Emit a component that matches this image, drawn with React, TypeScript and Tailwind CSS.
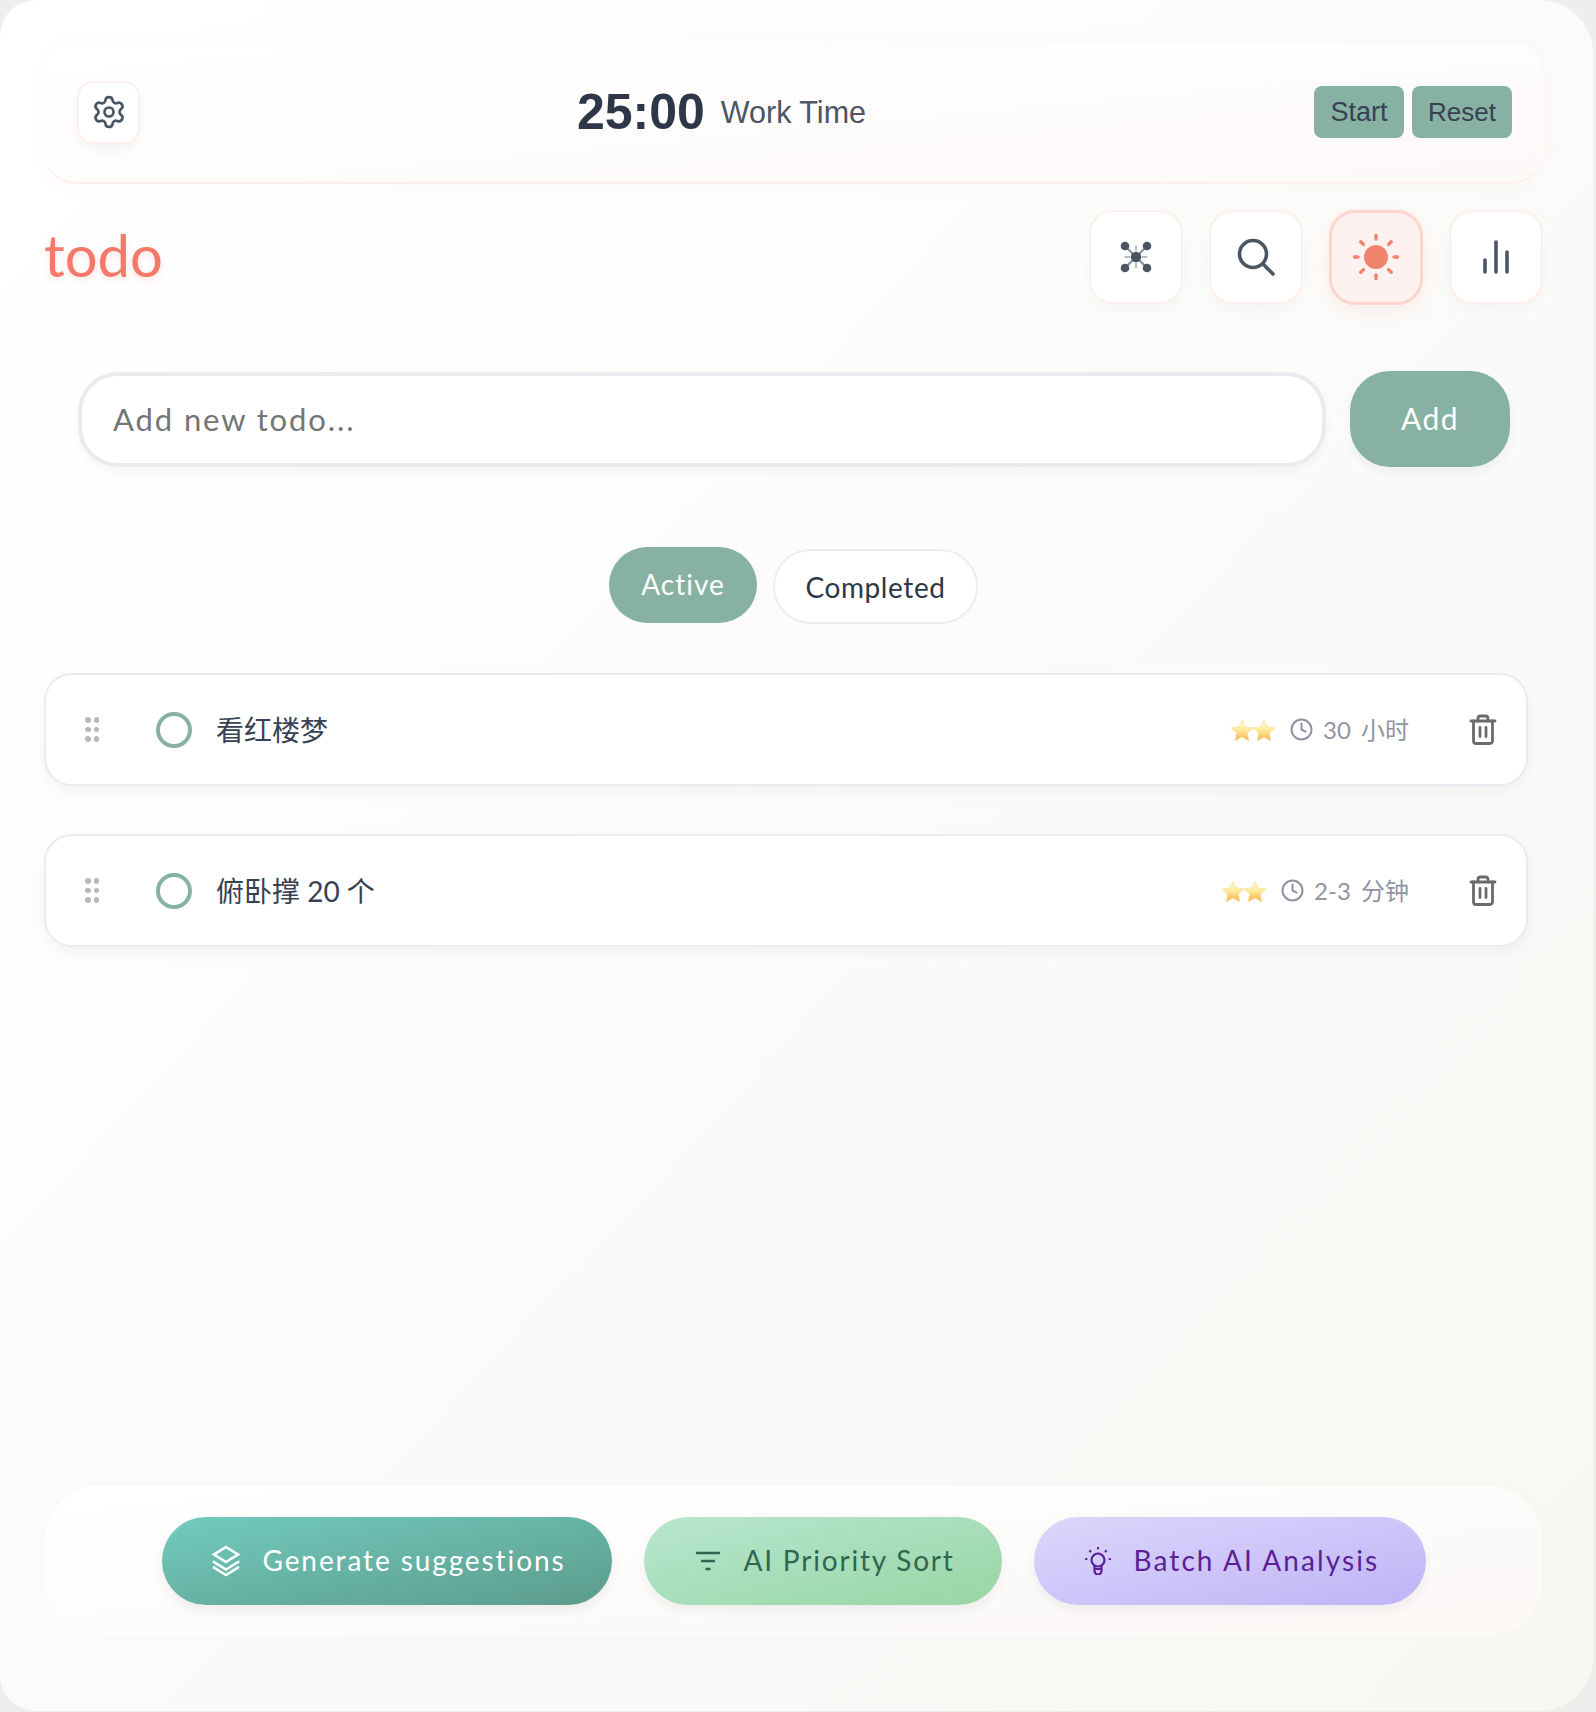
import React from "react";

const LATIN = "font-['Lato','Noto_Sans_CJK_SC',sans-serif]";

function Gear() {
  return (
    <svg width="36" height="36" viewBox="0 0 24 24" fill="none" stroke="#4b5563" strokeWidth="1.8" strokeLinecap="round" strokeLinejoin="round">
      <path d="M9.671 4.136a2.34 2.34 0 0 1 4.659 0 2.34 2.34 0 0 0 3.319 1.915 2.34 2.34 0 0 1 2.33 4.033 2.34 2.34 0 0 0 0 3.831 2.34 2.34 0 0 1-2.33 4.033 2.34 2.34 0 0 0-3.319 1.915 2.34 2.34 0 0 1-4.659 0 2.34 2.34 0 0 0-3.32-1.915 2.34 2.34 0 0 1-2.33-4.033 2.34 2.34 0 0 0 0-3.831A2.34 2.34 0 0 1 6.35 6.051a2.34 2.34 0 0 0 3.319-1.915" />
      <circle cx="12" cy="12" r="3" />
    </svg>
  );
}

function Network() {
  return (
    <svg width="32" height="32" viewBox="0 0 32 32" fill="none" strokeLinecap="round">
      <g stroke="#b9bcc3" strokeWidth="2">
        <path d="M16 5.5v4M16 22.5v4M5.5 16h4M22.5 16h4" />
      </g>
      <g stroke="#8a8f9a" strokeWidth="2.2">
        <path d="M5 5l22 22M27 5L5 27" />
      </g>
      <g fill="#4b5563">
        <circle cx="5" cy="5" r="4.3" />
        <circle cx="27" cy="5" r="4.3" />
        <circle cx="5" cy="27" r="4.3" />
        <circle cx="27" cy="27" r="4.3" />
        <circle cx="16" cy="16" r="5.2" />
      </g>
    </svg>
  );
}

function Search() {
  return (
    <svg width="38" height="38" viewBox="0 0 38 38" fill="none" stroke="#4b5563" strokeWidth="3.6" strokeLinecap="round">
      <circle cx="16" cy="16" r="13.5" />
      <path d="M26 26l10 10" />
    </svg>
  );
}

function Sun() {
  return (
    <svg width="48" height="48" viewBox="0 0 48 48" fill="#f2836c" stroke="none">
      <circle cx="24" cy="24" r="12" />
      <g stroke="#f2836c" strokeWidth="3.4" strokeLinecap="round">
        <path d="M24 2.5v3.5M24 42v3.5M2.5 24H6M42 24h3.5M8.8 8.8l2.6 2.6M36.6 36.6l2.6 2.6M39.2 8.8l-2.6 2.6M11.4 36.6l-2.6 2.6" />
      </g>
    </svg>
  );
}

function Bars() {
  return (
    <svg width="28" height="34" viewBox="0 0 28 34" fill="none" stroke="#4b5563" strokeWidth="3.6" strokeLinecap="round">
      <path d="M3 20v12M14 2v30M25 12v20" />
    </svg>
  );
}

function Dots() {
  return (
    <div className="grid grid-cols-2 gap-x-[3px] gap-y-[4px] w-[14px]">
      {[0, 1, 2, 3, 4, 5].map((i) => (
        <span key={i} className="block w-[5.5px] h-[5.5px] rounded-full bg-[#b7b7c0]" />
      ))}
    </div>
  );
}

function Star() {
  return (
    <svg width="24" height="22" viewBox="0 0 24 22" className="-mr-[2px]">
      <defs>
        <linearGradient id="starfill" x1="0" y1="0" x2="0" y2="1">
          <stop offset="0" stopColor="#fffbe2" />
          <stop offset="0.5" stopColor="#fee896" />
          <stop offset="1" stopColor="#f5ae4c" />
        </linearGradient>
      </defs>
      <path d="M12 1l3.3 7 7.7.9-5.7 5.2 1.5 7.6L12 17.9 5.2 21.7l1.5-7.6L1 8.9 8.7 8z" fill="url(#starfill)" stroke="#f8d88e" strokeWidth="0.6" strokeLinejoin="round" />
    </svg>
  );
}

function Clock() {
  return (
    <svg width="23" height="23" viewBox="0 0 23 23" fill="none" stroke="#8d93a1" strokeWidth="2" strokeLinecap="round" strokeLinejoin="round">
      <circle cx="11.5" cy="11.5" r="10" />
      <path d="M11.5 5.5v6l4 2.2" />
    </svg>
  );
}

function Trash() {
  return (
    <svg width="28" height="31" viewBox="0 0 28 31" fill="none" stroke="#6b6b6b" strokeWidth="2.8" strokeLinecap="round" strokeLinejoin="round">
      <path d="M2 7h24" />
      <path d="M9 7V4.5A2.5 2.5 0 0 1 11.5 2h5A2.5 2.5 0 0 1 19 4.5V7" />
      <path d="M4.5 7v20a2.5 2.5 0 0 0 2.5 2.5h14a2.5 2.5 0 0 0 2.5-2.5V7" />
      <path d="M11 13.5v9M17 13.5v9" />
    </svg>
  );
}

function Layers() {
  return (
    <svg width="34" height="32" viewBox="0 0 34 32" fill="none" stroke="#ffffff" strokeWidth="2.6" strokeLinecap="square">
      <path d="M17 2l12 7.5-12 7.5-12-7.5z" />
      <path d="M5 17l12 7.5 12-7.5" />
      <path d="M5 22.5l12 7.5 12-7.5" />
    </svg>
  );
}

function Filter() {
  return (
    <svg width="24" height="22" viewBox="0 0 24 22" fill="none" stroke="#2f6650" strokeWidth="2.4">
      <path d="M0 3h24M5 11h14M9.5 19h5" />
    </svg>
  );
}

function Bulb() {
  return (
    <svg width="26" height="28" viewBox="0 0 26 28" fill="none" stroke="#5b1f96" strokeWidth="2.2" strokeLinecap="round" strokeLinejoin="round">
      <path d="M13 13m-6.5 0a6.5 6.5 0 1 0 13 0a6.5 6.5 0 1 0-13 0" />
      <path d="M9.5 19v5a3.5 3.5 0 0 0 7 0v-5" />
      <path d="M10 22h6" />
      <path d="M13 1v.5M5 4l.4.5M21 4l-.4.5M1 12h.5M25 12h-.5" />
    </svg>
  );
}

function IconBtn({ children }: { children: React.ReactNode }) {
  return (
    <button className="w-[94px] h-[94px] rounded-[24px] bg-white border-2 border-[#ffefec] shadow-[0_6px_16px_rgba(0,0,0,0.03)] flex items-center justify-center">
      {children}
    </button>
  );
}

function TodoCard({ title, time }: { title: string; time: string }) {
  return (
    <div className="h-[113px] w-[1484px] rounded-[28px] bg-white border-2 border-[#ebebf1] shadow-[0_6px_14px_rgba(0,0,0,0.04)] flex items-center pl-[39px] pr-[29px]">
      <Dots />
      <span className="ml-[57px] w-[36px] h-[36px] rounded-full border-[4px] border-[#86b3a1] box-border" />
      <span className="ml-[24px] flex-1 text-[28px] leading-none text-[#374151] font-['Lato','Noto_Sans_CJK_SC',sans-serif]">{title}</span>
      <div className="flex items-center">
        <Star />
        <Star />
      </div>
      <div className="ml-[16px]">
        <Clock />
      </div>
      <span className="ml-[10px] text-right whitespace-nowrap text-[24px] leading-none [word-spacing:4px] text-[#8f95a3] font-['Lato','Noto_Sans_CJK_SC',sans-serif]">{time}</span>
      <div className="ml-[60px]">
        <Trash />
      </div>
    </div>
  );
}

export default function App() {
  return (
    <div className="w-[1596px] h-[1712px] bg-[#eeeeec] overflow-hidden">
      <div className="w-[1593px] h-[1711px] rounded-tl-[36px] rounded-bl-[36px] rounded-tr-[54px] rounded-br-[54px] bg-gradient-to-br from-white to-[#f7f7f4] flex flex-col pl-[44px] pr-[50px] pt-[42px] pb-[74px]">
        {/* Timer */}
        <div className="h-[142px] shrink-0 rounded-[32px] bg-gradient-to-br from-white to-[#fdf9f8] border-b-2 border-[#fdeeeb] shadow-[0_0_14px_rgba(255,200,190,0.1)] flex items-center justify-between pl-[33px] pr-[31px]">
          <button className="w-[63px] h-[63px] rounded-[16px] bg-white border-2 border-[#ffefec] shadow-[0_6px_12px_rgba(0,0,0,0.04)] flex items-center justify-center">
            <Gear />
          </button>
          <div className="flex items-center font-['Liberation_Sans',sans-serif] -ml-[11px]">
            <span className="text-[50px] leading-none font-bold text-[#2d3748]">25:00</span>
            <span className="ml-[16px] text-[30.5px] leading-none text-[#4b5563]">Work Time</span>
          </div>
          <div className="flex items-center gap-[8px] font-['Liberation_Sans',sans-serif]">
            <button className="w-[90px] h-[52px] pt-[1px] rounded-[8px] bg-[#87b1a2] text-[27px] text-[#374151] flex items-center justify-center">Start</button>
            <button className="w-[100px] h-[52px] pt-[1px] rounded-[8px] bg-[#87b1a2] text-[26px] text-[#374151] flex items-center justify-center">Reset</button>
          </div>
        </div>

        {/* Header */}
        <div className="mt-[26px] h-[94px] shrink-0 flex items-center justify-between">
          <h1 className={`${LATIN} pb-[4px] text-[58px] leading-none font-normal text-[#f4796b] [text-shadow:0_3px_6px_rgba(244,121,107,0.2)]`}>todo</h1>
          <div className="flex items-center gap-[26px]">
            <IconBtn><Network /></IconBtn>
            <IconBtn><Search /></IconBtn>
            <button className="w-[94px] h-[95px] rounded-[26px] bg-[#fef2f0] border-[3px] border-[#fcd5cd] shadow-[0_6px_18px_rgba(244,121,107,0.1)] flex items-center justify-center">
              <Sun />
            </button>
            <IconBtn><Bars /></IconBtn>
          </div>
        </div>

        {/* Input */}
        <div className="mt-[67px] shrink-0 flex items-center pl-[34px] pr-[33px] gap-[24px]">
          <div className="flex-1 h-[95px] rounded-[40px] bg-white border-[4px] border-[#e9ebef] shadow-[0_6px_12px_rgba(0,0,0,0.03)] flex items-center pl-[31px]">
            <span className={`${LATIN} text-[31px] tracking-[1.9px] text-[#757575]`}>Add new todo...</span>
          </div>
          <button className={`${LATIN} w-[160px] h-[96px] pb-[2px] rounded-[40px] bg-[#87b1a2] text-[30px] tracking-[1.5px] text-white shadow-[0_6px_12px_rgba(0,0,0,0.05)]`}>Add</button>
        </div>

        {/* Tabs */}
        <div className="mt-[80px] shrink-0 flex items-start justify-center gap-[16px]">
          <button className={`${LATIN} w-[148px] h-[76px] pb-[2px] rounded-full bg-[#87b1a2] text-[28px] tracking-[1px] text-white`}>Active</button>
          <button className={`${LATIN} mt-[2px] w-[205px] h-[75px] rounded-full bg-white border-2 border-[#ecedf1] text-[28px] tracking-[0.6px] text-[#2d3748]`}>Completed</button>
        </div>

        {/* Todos */}
        <div className="mt-[49px] flex flex-col gap-[48px]">
          <TodoCard title="看红楼梦" time="30 小时" />
          <TodoCard title="俯卧撑 20 个" time="2-3 分钟" />
        </div>

        {/* Footer */}
        <div className="mt-auto h-[152px] shrink-0 rounded-[56px] bg-gradient-to-br from-white to-[#fbf8f6] shadow-[0_0_4px_rgba(0,0,0,0.03)] flex items-center justify-center gap-[32px]">
          <button className="w-[450px] h-[88px] rounded-full bg-gradient-to-br from-[#72cbc0] to-[#5c9c8b] shadow-[0_6px_12px_rgba(0,0,0,0.06)] flex items-center pl-[47px] gap-[20px]">
            <Layers />
            <span className={`${LATIN} pb-[2px] text-[28px] tracking-[1.9px] text-white whitespace-nowrap`}>Generate suggestions</span>
          </button>
          <button className="w-[358px] h-[88px] rounded-full bg-gradient-to-br from-[#b8e6d0] to-[#98d6a4] shadow-[0_6px_12px_rgba(0,0,0,0.05)] flex items-center pl-[52px] gap-[24px]">
            <Filter />
            <span className={`${LATIN} pb-[2px] text-[28px] tracking-[1.8px] text-[#2f6650] whitespace-nowrap`}>AI Priority Sort</span>
          </button>
          <button className="w-[392px] h-[88px] rounded-full bg-gradient-to-br from-[#dcd6fb] to-[#c0b4f6] shadow-[0_6px_12px_rgba(0,0,0,0.05)] flex items-center pl-[51px] gap-[23px]">
            <Bulb />
            <span className={`${LATIN} pb-[2px] text-[28px] tracking-[2.1px] text-[#5b1f96] whitespace-nowrap`}>Batch AI Analysis</span>
          </button>
        </div>
      </div>
    </div>
  );
}
